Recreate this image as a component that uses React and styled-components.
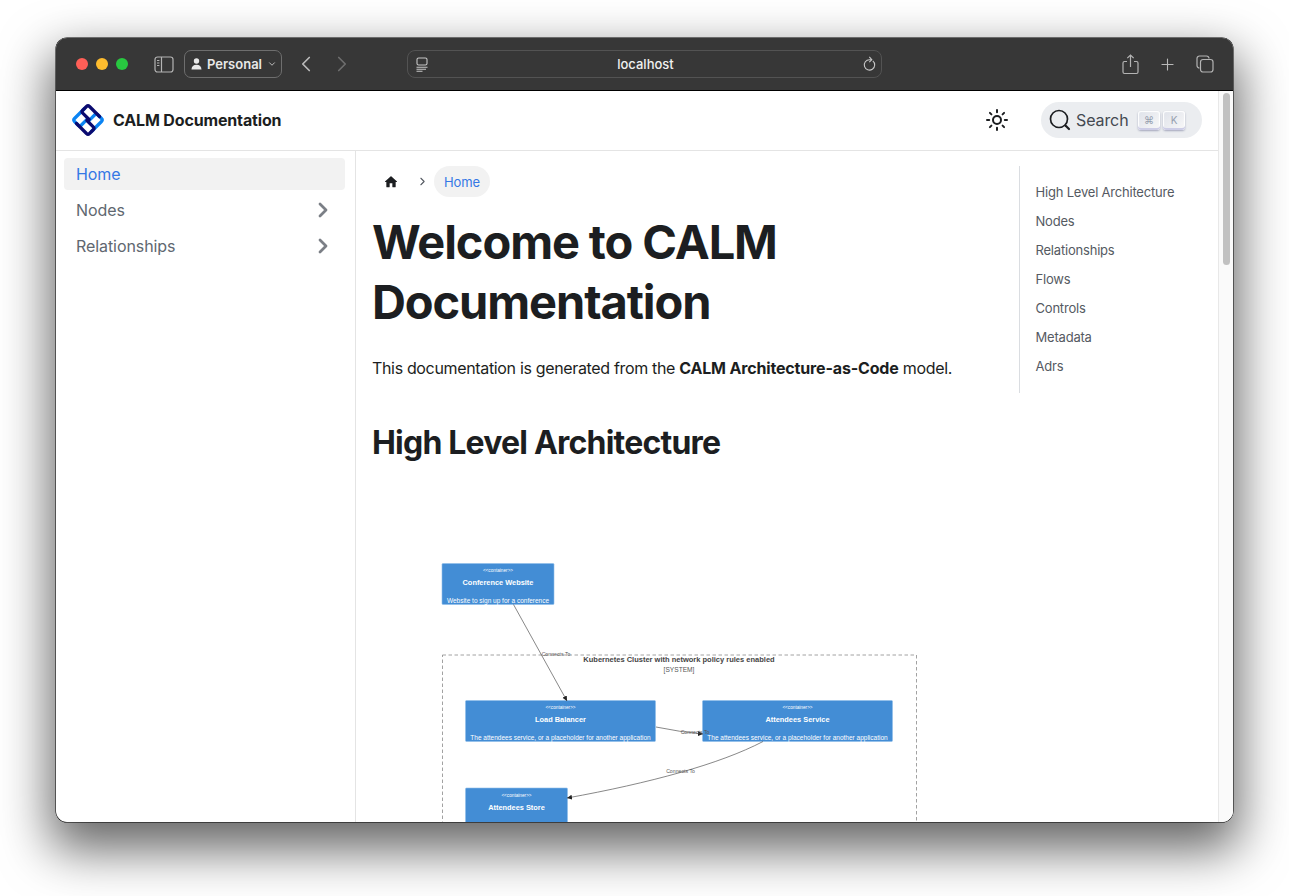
import React from "react";
import styled, { createGlobalStyle } from "styled-components";
import { ChevronRight, Plus, ChevronLeft, ChevronDown } from "lucide-react";

const Global = createGlobalStyle`
  html, body {
    margin: 0;
    padding: 0;
    background: #fff;
    overflow: hidden;
  }
  body {
    font-family: Inter, "Liberation Sans", sans-serif;
    color: #1c1e21;
  }
`;

const tocItems = ["High Level Architecture", "Nodes", "Relationships", "Flows", "Controls", "Metadata", "Adrs"];

const hook = "M13.500 5.500 3.500 15.500q-1.500 1.500 0 3l4 4q1.200 1.200 2.400 0l6.600-6.600";

const App = () => {
  return (
    <Desktop>
      <Global />
      <Window>
        <Chrome>
          <Light color="#ff5f57" />
          <Light color="#febc2e" />
          <Light color="#28c840" />
          <SidebarToggle width="20" height="17" viewBox="0 0 20 17" fill="none" stroke="#b4b4b4" strokeWidth="1.2">
            <rect x="1" y="1" width="18" height="15" rx="2.5" />
            <path d="M7.5 1v15M3 4.5h2.4M3 7h2.4M3 9.5h2.4" />
          </SidebarToggle>
          <Profile>
            <svg width="11" height="12" viewBox="0 0 11 12" fill="#e8e8e8">
              <circle cx="5.5" cy="3" r="2.7" />
              <path d="M0.5 11.5c0-3 2-4.7 5-4.7s5 1.700 5 4.700z" />
            </svg>
            <span>Personal</span>
            <ChevronDown size={10} strokeWidth={2.4} color="#bbb" />
          </Profile>
          <NavArrow><ChevronLeft size={26} strokeWidth={1.6} color="#b9b9b9" /></NavArrow>
          <NavArrow dim><ChevronRight size={26} strokeWidth={1.6} color="#6d6d6d" /></NavArrow>
          <Address>
            <svg width="12" height="15" viewBox="0 0 12 15" fill="none" stroke="#c8c8c8" strokeWidth="1.1">
              <rect x="1" y="1" width="10" height="7" rx="1.6" />
              <path d="M0.5 10.200h11M0.5 12.200h9.500M0.5 14.200h6" />
            </svg>
            <AddressText>localhost</AddressText>
            <svg width="13" height="16" viewBox="0 0 13 16" fill="none" stroke="#c8c8c8" strokeWidth="1.1">
              <path d="M9.800 4.900a5.200 5.200 0 1 1-3.300-1.200H8" />
              <path d="M6.300 0.900 8.800 3.700 6.300 6.200" />
            </svg>
          </Address>
          <ChromeRight>
            <svg width="17" height="21" viewBox="0 0 17 21" fill="none" stroke="#b4b4b4" strokeWidth="1.200">
              <path d="M5 7.500H2.500a1.500 1.500 0 0 0-1.500 1.500v9a1.500 1.500 0 0 0 1.500 1.500h12a1.500 1.500 0 0 0 1.500-1.500V9a1.500 1.500 0 0 0-1.500-1.500H12" />
              <path d="M8.500 13V1.200M5.300 4.200 8.500 1l3.200 3.200" />
            </svg>
            <Plus size={19} strokeWidth={1.4} color="#b9b9b9" />
            <svg width="18" height="18" viewBox="0 0 18 18" fill="none" stroke="#b4b4b4" strokeWidth="1.200">
              <rect x="4.500" y="4.500" width="12.500" height="12.500" rx="2.500" />
              <path d="M3.500 13A2.500 2.500 0 0 1 1 10.500V3.500A2.500 2.500 0 0 1 3.500 1h7A2.500 2.500 0 0 1 13 3.500" />
            </svg>
          </ChromeRight>
        </Chrome>
        <Viewport>
          <Page>
            <Navbar>
              <Brand>
                <svg width="34" height="34" viewBox="0 0 34 34" fill="none" strokeWidth="3.200" strokeLinecap="round" strokeLinejoin="round">
                  <path d={hook} stroke="#0b84f3" />
                  <path d={hook} stroke="#0b84f3" transform="rotate(180 17 17)" />
                  <path d={hook} stroke="#0a0a70" transform="rotate(90 17 17)" />
                  <path d={hook} stroke="#0a0a70" transform="rotate(270 17 17)" />
                </svg>
                <BrandName>CALM Documentation</BrandName>
              </Brand>
              <NavTools>
                <svg width="22" height="22" viewBox="0 0 22 22" fill="none" stroke="#1c1e21" strokeWidth="2" strokeLinecap="round">
                  <circle cx="11" cy="11" r="4" />
                  <path d="M11 1v2.200M11 18.800V21M1 11h2.200M18.800 11H21M3.900 3.900l1.500 1.500M16.600 16.600l1.500 1.500M3.900 18.100l1.500-1.500M16.600 5.400l1.500-1.500" />
                </svg>
                <SearchBox>
                  <svg width="22" height="22" viewBox="0 0 22 22" fill="none" stroke="#1c1e21" strokeWidth="1.700" strokeLinecap="round">
                    <circle cx="10" cy="10" r="8.500" />
                    <path d="M16.500 16.500l3.500 3.500" strokeWidth="2.200" />
                  </svg>
                  <SearchLabel>Search</SearchLabel>
                  <Keys>
                    <Key>⌘</Key>
                    <Key>K</Key>
                  </Keys>
                </SearchBox>
              </NavTools>
            </Navbar>
            <Body>
              <Sidebar>
                <SideItem active>Home</SideItem>
                <SideItem>
                  Nodes
                  <ChevronRight size={24} strokeWidth={2.800} color="#7b7f86" />
                </SideItem>
                <SideItem>
                  Relationships
                  <ChevronRight size={24} strokeWidth={2.800} color="#7b7f86" />
                </SideItem>
              </Sidebar>
              <Main>
                <Article>
                  <Crumbs>
                    <HomeLink>
                      <svg width="16" height="16" viewBox="0 0 24 24" fill="#1c1e21">
                        <path d="M10 19v-5h4v5c0 .55.45 1 1 1h3c.55 0 1-.45 1-1v-7h1.700c.46 0 .68-.57.33-.87L12.670 3.600c-.38-.34-.96-.34-1.340 0l-8.360 7.530c-.34.300-.13.870.33.870H5v7c0 .55.45 1 1 1h3c.55 0 1-.45 1-1z" />
                      </svg>
                    </HomeLink>
                    <ChevronRight size={13} strokeWidth={2} color="#555a62" />
                    <Crumb>Home</Crumb>
                  </Crumbs>
                  <Title>Welcome to CALM Documentation</Title>
                  <Intro>
                    This documentation is generated from the <strong>CALM Architecture-as-Code</strong> model.
                  </Intro>
                  <Heading>High Level Architecture</Heading>
                  <Diagram />
                </Article>
                <Toc>
                  {tocItems.map((item) => (
                    <TocLink key={item}>{item}</TocLink>
                  ))}
                </Toc>
              </Main>
            </Body>
          </Page>
          <Scrollbar>
            <Thumb />
          </Scrollbar>
        </Viewport>
      </Window>
    </Desktop>
  );
};

// page coordinates are kept in the viewBox, so the drawing reads like the picture
const Box = ({ x, y, w, h, name, type, desc }) => (
  <g>
    <rect x={x} y={y} width={w} height={h} rx="1" fill="#438dd5" stroke="#8fbdea" strokeWidth="0.600" />
    <text x={x + w / 2} y={y + 8.500} fontSize="4.700" fill="#fff" textAnchor="middle">{type}</text>
    <text x={x + w / 2} y={y + 21.500} fontSize="7.400" fontWeight="700" fill="#fff" textAnchor="middle">{name}</text>
    {desc && <text x={x + w / 2} y={y + 39} fontSize="6.500" fill="#fff" textAnchor="middle">{desc}</text>}
  </g>
);

const EdgeLabel = ({ x, y, children }) => (
  <text x={x} y={y} fontSize="5.200" fill="#555" textAnchor="middle">{children}</text>
);

const Diagram = () => {
  const desc = "The attendees service, or a placeholder for another application";
  return (
    <DiagramSvg viewBox="372 480 640 345" fontFamily="'Liberation Sans', Arial, sans-serif">
      <defs>
        <marker id="arrow" markerWidth="7" markerHeight="7" markerUnits="userSpaceOnUse" refX="5" refY="2.500" orient="auto">
          <path d="M0 0 5 2.500 0 5z" fill="#222" />
        </marker>
      </defs>
      <rect x="442.500" y="655" width="474" height="190" fill="none" stroke="#8a8a8a" strokeWidth="0.800" strokeDasharray="3.500 2.500" />
      <text x="679" y="661.500" fontSize="7.500" fontWeight="700" fill="#444" textAnchor="middle">Kubernetes Cluster with network policy rules enabled</text>
      <text x="679" y="671.500" fontSize="6.600" fill="#555" textAnchor="middle">[SYSTEM]</text>
      <Box x={442} y={563.500} w={112} h={41} type="<<container>>" name="Conference Website" desc="Website to sign up for a conference" />
      <Box x={465.500} y={700.500} w={190} h={41} type="<<container>>" name="Load Balancer" desc={desc} />
      <Box x={702.500} y={700.500} w={190} h={41} type="<<container>>" name="Attendees Service" desc={desc} />
      <Box x={465.500} y={788} w={102} h={60} type="<<container>>" name="Attendees Store" />
      <g fill="none" stroke="#555" strokeWidth="0.700" markerEnd="url(#arrow)">
        <path d="M513.500 604.500 567 701" />
        <path d="M656 727q24 5 47 7" />
        <path d="M763 741.500C720 764 650 783 567 798" />
      </g>
      <EdgeLabel x={556} y={655.500}>Connects To</EdgeLabel>
      <EdgeLabel x={695} y={734}>Connects To</EdgeLabel>
      <EdgeLabel x={680.500} y={773}>Connects To</EdgeLabel>
    </DiagramSvg>
  );
};

export default App;

const Desktop = styled.div`
  width: 1289px;
  height: 896px;
  padding: 38px 0 0 56px;
  box-sizing: border-box;
  overflow: hidden;
`;
const Window = styled.div`
  width: 1177px;
  height: 784px;
  box-sizing: border-box;
  border-radius: 11px;
  overflow: hidden;
  display: flex;
  flex-direction: column;
  background: #fff;
  box-shadow: 0 0 0 0.5px #000, 0 22px 50px 6px rgba(0, 0, 0, 0.6);
`;
const Chrome = styled.div`
  height: 53px;
  flex: none;
  box-sizing: border-box;
  display: flex;
  align-items: center;
  padding: 0 19px 0 20px;
  background: #373737;
  border-bottom: 1px solid #000;
`;
const Light = styled.span`
  width: 12px;
  height: 12px;
  border-radius: 50%;
  margin-right: 8px;
  background: ${(p) => p.color};
`;
const SidebarToggle = styled.svg`
  margin: 0 10px 0 18px;
`;
const Profile = styled.div`
  width: 98px;
  height: 28px;
  box-sizing: border-box;
  display: flex;
  align-items: center;
  gap: 5px;
  padding: 0 4px 0 6px;
  border: 1px solid #6e6e6e;
  border-radius: 7px;
  color: #e8e8e8;
  font-size: 13px;
  font-weight: 600;
  svg:last-child {
    margin-left: auto;
  }
`;
const NavArrow = styled.div`
  width: 26px;
  display: flex;
  justify-content: center;
  margin-left: ${(p) => (p.dim ? "10px" : "11px")};
`;
const Address = styled.div`
  width: 475px;
  height: 28px;
  margin-left: 52px;
  box-sizing: border-box;
  display: flex;
  align-items: center;
  justify-content: space-between;
  padding: 0 5px 0 8px;
  border: 1px solid #535353;
  border-radius: 8px;
`;
const AddressText = styled.span`
  color: #f0f0f0;
  font-size: 13px;
  font-weight: 500;
`;
const ChromeRight = styled.div`
  margin-left: auto;
  display: flex;
  align-items: center;
  gap: 19px;
`;
const Viewport = styled.div`
  flex: 1;
  min-height: 0;
  display: flex;
`;
const Page = styled.div`
  flex: 1;
  min-width: 0;
  display: flex;
  flex-direction: column;
`;
const Navbar = styled.div`
  height: 60px;
  flex: none;
  box-sizing: border-box;
  display: flex;
  align-items: center;
  justify-content: space-between;
  padding: 0 16px 1px;
  border-bottom: 1px solid #e4e4e4;
`;
const Brand = styled.div`
  display: flex;
  align-items: center;
  gap: 7px;
  margin-left: -1px;
`;
const BrandName = styled.span`
  margin-left: 1px;
  font-size: 16px;
  font-weight: 700;
  letter-spacing: -0.15px;
  color: #1c1e21;
`;
const NavTools = styled.div`
  display: flex;
  align-items: center;
  gap: 33px;
`;
const SearchBox = styled.div`
  width: 161px;
  height: 36px;
  box-sizing: border-box;
  display: flex;
  align-items: center;
  padding: 0 17px 0 8px;
  border-radius: 18px;
  background: #ebedf0;
`;
const SearchLabel = styled.span`
  margin-left: 5px;
  font-size: 16px;
  letter-spacing: -0.1px;
  color: #444950;
`;
const Keys = styled.div`
  margin-left: auto;
  display: flex;
  gap: 3px;
`;
const Key = styled.span`
  width: 22px;
  height: 19px;
  display: flex;
  align-items: center;
  justify-content: center;
  border-radius: 3px;
  font-size: 10px;
  color: #969faf;
  background: linear-gradient(-225deg, #dfe2ea, #f8f8f8);
  box-shadow: inset 0 -2px 0 0 #cdcde6, inset 0 0 1px 1px #fff, 0 1px 2px 0 rgba(30, 35, 90, 0.35);
`;
const Body = styled.div`
  flex: 1;
  min-height: 0;
  display: flex;
`;
const Sidebar = styled.div`
  width: 300px;
  flex: none;
  box-sizing: border-box;
  padding: 7px 10px 0 8px;
  border-right: 1px solid #e4e4e4;
`;
const SideItem = styled.div`
  height: 32px;
  margin-bottom: 4px;
  box-sizing: border-box;
  display: flex;
  align-items: center;
  justify-content: space-between;
  padding: 0 10px 0 12px;
  border-radius: 4px;
  font-size: 16px;
  letter-spacing: -0.08px;
  color: ${(p) => (p.active ? "#3578e5" : "#606770")};
  background: ${(p) => (p.active ? "#f2f2f2" : "transparent")};
`;
const Main = styled.div`
  flex: 1;
  min-width: 0;
  display: flex;
  overflow: hidden;
`;
const Article = styled.div`
  width: 663px;
  flex: none;
  box-sizing: border-box;
  padding: 15px 0 0 16px;
`;
const Crumbs = styled.div`
  display: flex;
  align-items: center;
  height: 31px;
  margin-bottom: 15px;
`;
const HomeLink = styled.div`
  width: 38px;
  display: flex;
  justify-content: center;
  margin-right: 6px;
`;
const Crumb = styled.div`
  height: 31px;
  margin-left: 5px;
  padding: 0 10px;
  display: flex;
  align-items: center;
  border-radius: 16px;
  background: #f2f2f2;
  color: #3578e5;
  font-size: 13px;
  letter-spacing: -0.1px;
`;
const Title = styled.h1`
  width: 560px;
  margin: 0 0 22px;
  font-size: 47px;
  font-weight: 700;
  letter-spacing: -1.1px;
  line-height: 60px;
  color: #1c1e21;
`;
const Intro = styled.p`
  margin: 0 0 40px;
  font-size: 16px;
  letter-spacing: -0.34px;
  line-height: 29px;
  strong {
    font-weight: 700;
    letter-spacing: -0.16px;
  }
`;
const Heading = styled.h2`
  margin: 0 0 17px;
  font-size: 32px;
  font-weight: 700;
  letter-spacing: -0.8px;
  line-height: 40px;
`;
const DiagramSvg = styled.svg`
  display: block;
  width: 640px;
  height: 345px;
`;
const Toc = styled.div`
  align-self: flex-start;
  width: 198px;
  box-sizing: border-box;
  margin-top: 15px;
  padding: 12px 0 12px 15.5px;
  border-left: 1px solid #dadde1;
  display: flex;
  flex-direction: column;
`;
const TocLink = styled.div`
  font-size: 13px;
  letter-spacing: -0.2px;
  line-height: 29px;
  color: #555a62;
`;
const Scrollbar = styled.div`
  width: 15px;
  flex: none;
  box-sizing: border-box;
  padding: 2px 3px 0 4px;
  background: #fafafa;
  border-left: 1px solid #e8e8e8;
`;
const Thumb = styled.div`
  height: 172px;
  border-radius: 4px;
  background: #c1c1c1;
`;
